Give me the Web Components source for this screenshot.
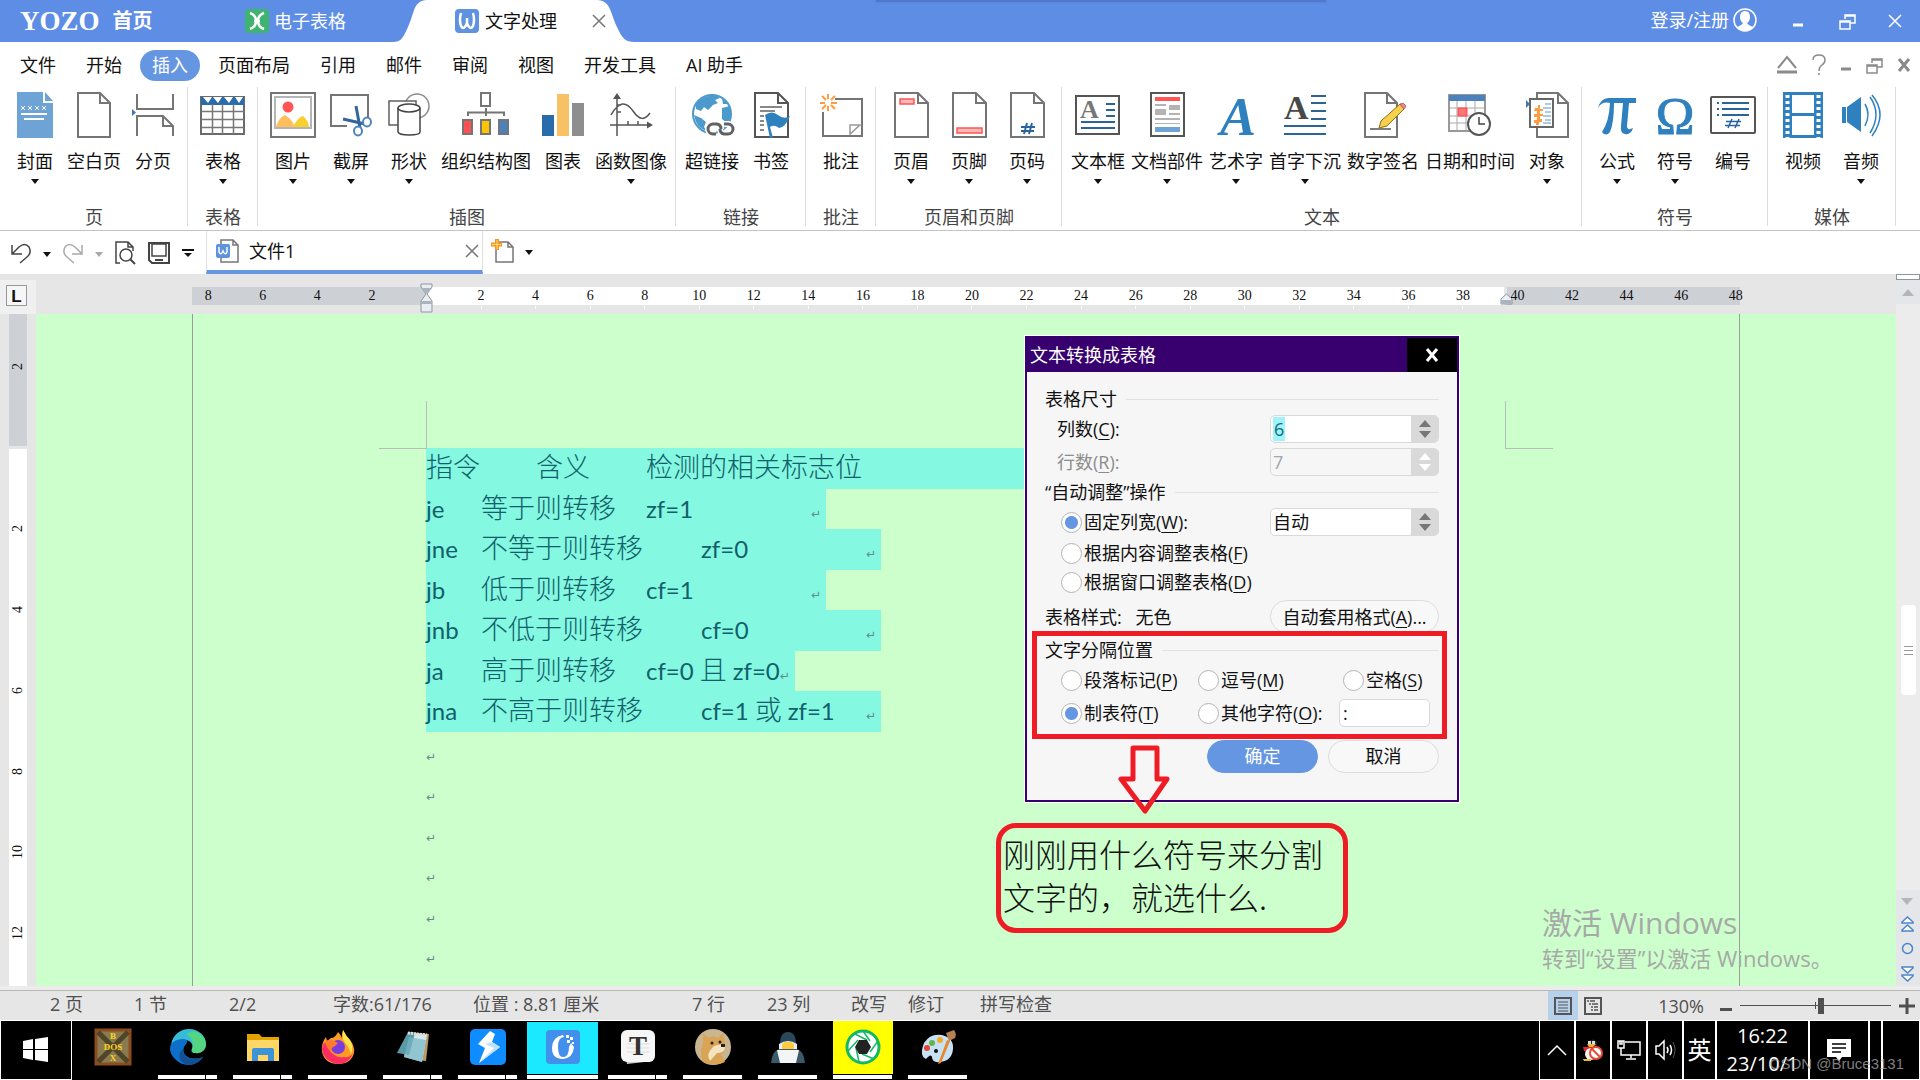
<!DOCTYPE html>
<html lang="zh-CN">
<head>
<meta charset="utf-8">
<title>文字处理 - 文件1</title>
<style>
    body {
        margin: 0;
        min-height: 100vh;
        display: flex;
        flex-direction: column;
        overflow: hidden;
        font: 18px/22px "Open Sans", "Noto Sans CJK SC", sans-serif;
        color: #111;
        background: #fff;
    }
    work-space { flex: 1; }
</style>
</head>
<body>
<title-bar></title-bar>
<ribbon-menu></ribbon-menu>
<ribbon-bar>
    <ribbon-group label="页">
        <ribbon-button icon="cover" menu>封面</ribbon-button>
        <ribbon-button icon="blank">空白页</ribbon-button>
        <ribbon-button icon="break">分页</ribbon-button>
    </ribbon-group>
    <ribbon-group label="表格">
        <ribbon-button icon="table" menu>表格</ribbon-button>
    </ribbon-group>
    <ribbon-group label="插图">
        <ribbon-button icon="picture" menu>图片</ribbon-button>
        <ribbon-button icon="snip" menu>截屏</ribbon-button>
        <ribbon-button icon="shapes" menu>形状</ribbon-button>
        <ribbon-button icon="org">组织结构图</ribbon-button>
        <ribbon-button icon="chart">图表</ribbon-button>
        <ribbon-button icon="func" menu>函数图像</ribbon-button>
    </ribbon-group>
    <ribbon-group label="链接">
        <ribbon-button icon="link">超链接</ribbon-button>
        <ribbon-button icon="bookmark">书签</ribbon-button>
    </ribbon-group>
    <ribbon-group label="批注">
        <ribbon-button icon="comment">批注</ribbon-button>
    </ribbon-group>
    <ribbon-group label="页眉和页脚">
        <ribbon-button icon="header" menu>页眉</ribbon-button>
        <ribbon-button icon="footer" menu>页脚</ribbon-button>
        <ribbon-button icon="pageno" menu>页码</ribbon-button>
    </ribbon-group>
    <ribbon-group label="文本">
        <ribbon-button icon="textbox" menu>文本框</ribbon-button>
        <ribbon-button icon="parts" menu>文档部件</ribbon-button>
        <ribbon-button icon="wordart" menu>艺术字</ribbon-button>
        <ribbon-button icon="dropcap" menu>首字下沉</ribbon-button>
        <ribbon-button icon="sign">数字签名</ribbon-button>
        <ribbon-button icon="date">日期和时间</ribbon-button>
        <ribbon-button icon="object" menu>对象</ribbon-button>
    </ribbon-group>
    <ribbon-group label="符号">
        <ribbon-button icon="formula" menu>公式</ribbon-button>
        <ribbon-button icon="omega" menu>符号</ribbon-button>
        <ribbon-button icon="number">编号</ribbon-button>
    </ribbon-group>
    <ribbon-group label="媒体">
        <ribbon-button icon="video">视频</ribbon-button>
        <ribbon-button icon="audio" menu>音频</ribbon-button>
    </ribbon-group>
</ribbon-bar>
<quick-bar></quick-bar>
<work-space></work-space>
<status-bar></status-bar>
<task-bar></task-bar>

<script>
const SHEET = (x, w) => `<path d="M${x} 1H${x + w - 10}L${x + w} 11V45H${x}Z" fill="#fff" stroke="#757575" stroke-width="2"/><path d="M${x + w - 10} 1V11H${x + w}" fill="none" stroke="#757575" stroke-width="2"/>`;

// name: [width, height, markup]
const ICONS = {
    cover: [48, 46, `<path d="M6 0H32V11H42V46H6Z" fill="#6ea3d5"/><path d="M34 0L42 9H34Z" fill="#6ea3d5"/><path d="M10 14l4 4m0-4l-4 4m7-4l4 4m0-4l-4 4m7-4l4 4m0-4l-4 4m7-4l4 4m0-4l-4 4" stroke="#fff"/><path d="M10 22H36M13 27H33" stroke="#fff" stroke-width="2"/>`],
    blank: [48, 46, SHEET(8, 32)],
    break: [48, 46, `<path d="M8 2V17H44V2M8 44V24H34L44 34V44M34 24V34H44" fill="none" stroke="#757575" stroke-width="2"/><path d="M3 17L7 20.500L3 24Z" fill="#3f78b5"/>`],
    table: [48, 46, `<rect x="2" y="5" width="43" height="37" fill="#fff" stroke="#6b6b6b" stroke-width="2"/><path d="M2 5h43v8H2z" fill="#2a6cab"/><path d="M4 5h9l-4 6zM14 5h9l-4 6zM25 5h9l-4 6zM36 5h8l-4 6z" fill="#fff"/><path d="M2 19.500H45M2 27.500H45M2 35.500H45M13.500 12V42M23.500 12V42M34.500 12V42" stroke="#777" stroke-width="1.500"/>`],
    picture: [48, 46, `<rect x="2" y="1" width="44" height="44" fill="#fff" stroke="#757575" stroke-width="2"/><rect x="6" y="5" width="36" height="31" fill="#fff" stroke="#b5b5b5" stroke-width="2"/><circle cx="19" cy="15" r="5.500" fill="#ff5555"/><path d="M7 35C9 28 12 25 16 23Q22 26 26 35Z" fill="#ffbe5c"/><path d="M24 35Q29 25 34 24Q39 28 40 35Z" fill="#f7cf2e"/>`],
    snip: [48, 46, `<path d="M20 34H4V3H41V26" fill="none" stroke="#757575" stroke-width="2"/><path d="M16 27L38 32M29 14L33 36" stroke="#33659e" stroke-width="3"/><ellipse cx="31" cy="39" rx="4" ry="4.500" fill="#fff" stroke="#4d83bd" stroke-width="2"/><ellipse cx="40" cy="30" rx="4" ry="4.500" fill="#fff" stroke="#4d83bd" stroke-width="2"/>`],
    shapes: [48, 46, `<circle cx="32" cy="14" r="12" fill="#fff" stroke="#8c8c8c" stroke-width="1.500"/><rect x="4" y="9" width="27" height="24" fill="#fff" stroke="#606060" stroke-width="1.500"/><path d="M13 16V40Q14 43 24 43Q35 43 35 40V16" fill="#fff" stroke="#444" stroke-width="1.500"/><ellipse cx="24" cy="16" rx="11" ry="4" fill="#fff" stroke="#444" stroke-width="1.500"/>`],
    org: [48, 46, `<rect x="19" y="1" width="9" height="13" fill="#fff" stroke="#757575" stroke-width="2"/><path d="M24 16V24M6 24V20.500H42V24" fill="none" stroke="#757575" stroke-width="2"/><path d="M1 28h9v14h-9z" fill="#ff5151" stroke="#757575" stroke-width="2"/><path d="M19 28h9v14h-9z" fill="#ffc400" stroke="#757575" stroke-width="2"/><path d="M37 28h9v14h-9z" fill="#4b82bd" stroke="#757575" stroke-width="2"/>`],
    chart: [48, 46, `<path d="M3 23h12v21H3z" fill="#286cab"/><path d="M18 2h12v42H18z" fill="#f8c264"/><path d="M33 11h12v33H33z" fill="#8e8e8e"/>`],
    func: [48, 46, `<path d="M10 44V4M3 33H44M4 23C12 9 19 9 26 19S38 28 43 21M10 13h4M10 20h4M21 33v-4M31 33v-4" fill="none" stroke="#555" stroke-width="1.500"/><path d="M6 7L10 1L14 7zM40 29.500L46 33L40 36.500z" fill="#555"/>`],
    link: [48, 46, `<circle cx="24" cy="22" r="19" fill="#fff" stroke="#4c9acb" stroke-width="2"/><path d="M8 12Q15 3 28 3L32 6L27 8L30 11L25 13L20 18L16 15L13 19L8 17zM6 23L13 26L18 30L16 35L19 39Q8 36 6 23zM34 16L42 14Q45 25 39 31L34 27zM34 6L40 12L35 12z" fill="#4c9acb"/><g fill="none" stroke="#fff" stroke-width="6"><path d="M28 42H25A5 5 0 0 1 25 32H29A5 5 0 0 1 33 37M36 32H40A5 5 0 0 1 40 42H36A5 5 0 0 1 32 37"/></g><g fill="none" stroke="#626262" stroke-width="3"><path d="M28 42H25A5 5 0 0 1 25 32H29A5 5 0 0 1 33 37M36 32H40A5 5 0 0 1 40 42H36A5 5 0 0 1 32 37"/></g>`],
    bookmark: [48, 46, SHEET(8, 33).replaceAll('#757575', '#555') + `<path d="M13 15H35M13 19H28M13 24H17M13 29H17M13 33H17M13 38H17" stroke="#888" stroke-width="2"/><path d="M18 23Q25 18 31 23Q37 28 43 24Q38 36 32 36Q27 32 23 35L26 46H23Z" fill="#2f80be"/>`],
    comment: [48, 46, `<path d="M18 7H45V44H6V20" fill="none" stroke="#757575" stroke-width="2"/><path d="M33 42V33H43ZM33 42L43 33" fill="#fff" stroke="#999" stroke-width="1.500"/><path d="M11 2v5M11 14v5M3 11h5M14 11h6M5 4l4 4M18 4l-4 4M5 17l4-4M18 17l-4-4" stroke="#ff9c3f" stroke-width="2"/>`],
    header: [48, 46, SHEET(8, 33) + `<rect x="13" y="7" width="14" height="5" fill="#ffb9b9" stroke="#f55" stroke-width="1.500"/>`],
    footer: [48, 46, SHEET(8, 33) + `<rect x="12" y="36" width="25" height="5" fill="#ffb9b9" stroke="#f55" stroke-width="1.500"/>`],
    pageno: [48, 46, SHEET(8, 33) + `<path d="M24 31L21 42M29 31L26 42M18 35H32M18 39H31" stroke="#28659f" stroke-width="2"/>`],
    textbox: [48, 46, `<rect x="2" y="4" width="43" height="38" fill="#fff" stroke="#555" stroke-width="2"/><text x="6" y="26" font-size="26" font-weight="bold" fill="#777">A</text><path d="M32 12h9M32 18h9M32 24h9M7 30h34M7 36h34" stroke="#2a6598" stroke-width="2"/>`],
    parts: [48, 46, `<rect x="8" y="1" width="33" height="43" fill="#fff" stroke="#555" stroke-width="2"/><path d="M12 5h25v4H12z" fill="#ff5555"/><path d="M12 12h11v2H12zM12 17h11v6H12zM26 13h11v5H26zM26 21h11v2H26zM12 26h25v2H12zM12 31h25v1H12z" fill="#b3b3b3"/><path d="M12 35h25v5H12z" fill="#6ea3d5"/>`],
    wordart: [48, 46, `<text x="8" y="43" font-size="54" font-style="italic" font-weight="bold" fill="#2f80be">A</text>`],
    dropcap: [48, 46, `<text x="3" y="27" font-size="34" font-weight="bold" fill="#484848">A</text><path d="M30 4h15M30 11h15M30 19h15M30 27h15M3 34h42M3 42h42" stroke="#2a6598" stroke-width="2"/>`],
    sign: [48, 46, SHEET(6, 32) + `<path d="M11 37H32" stroke="#555" stroke-width="1.500"/><path d="M20 36L22 29L41 12L45 17L28 34Z" fill="#f8d04b" stroke="#8a6a1a"/><path d="M41 12Q45 10 47 14L45 17Z" fill="#f29090" stroke="#b56"/>`],
    date: [48, 46, `<rect x="3" y="3" width="36" height="36" fill="#fff" stroke="#999" stroke-width="2"/><path d="M3 9h36v-6H3z" fill="#4b82bd"/><path d="M4 16H38M4 24H38M4 31H38M11 9V38M20 9V38M29 9V38" stroke="#aaa"/><path d="M12 16h9v8h-9z" fill="#ff7474" stroke="#f44"/><circle cx="33" cy="32" r="11" fill="#fff" stroke="#555" stroke-width="2"/><path d="M33 25v7h6" fill="none" stroke="#444" stroke-width="1.500"/>`],
    object: [48, 46, SHEET(14, 31) + `<rect x="7" y="7" width="23" height="28" fill="#fff" stroke="#666" stroke-width="2"/><path d="M3 8L7 12L3 16Z" fill="#3f78b5"/><path d="M12 16h3v-3h2v4h3v2h-3v3h3v2h-3v3h2v3h-3v3h-3v-2h-2v-3h3v-3h-3v-3h3v-3h-3z" fill="#ff9c3f"/><path d="M22 12h6M20 16h8M22 20h6M20 24h8M22 28h6M20 31h8" stroke="#5a93ca"/>`],
    formula: [48, 46, `<path d="M5 16Q8 5 17 6H43V11H36L34 34Q34 39 40 36Q38 43 32 42Q27 41 28 34L30 11H21Q21 31 17 40Q13 45 9 40Q16 30 17 11Q9 9 5 16Z" fill="#2f80be"/>`],
    omega: [48, 46, `<text x="24" y="42" text-anchor="middle" font-size="52" fill="#2f80be" stroke="#2f80be">Ω</text>`],
    number: [48, 46, `<rect x="2" y="5" width="44" height="36" rx="1" fill="#fff" stroke="#555" stroke-width="2"/><path d="M13 11h27M13 17h27M13 23h27" stroke="#2a6598" stroke-width="2"/><path d="M8 11h2M8 17h2M8 23h2" stroke="#2a6598" stroke-width="2"/><path d="M23 27L19 36M30 27L26 36M17 29.500H32M16 33.500H31" stroke="#28659f" stroke-width="1.500"/>`],
    video: [48, 46, `<path d="M4 0h40v46H4z" fill="#2f80be"/><path d="M13 3h22v18H13zM13 24h22v19H13z" fill="#fff"/><path d="M8.500 3V46M39.500 3V46" stroke="#fff" stroke-width="4" stroke-dasharray="3 3"/>`],
    audio: [48, 46, `<path d="M5 15H9V31H5zM10 15L24 5V40L10 30z" fill="#2f80be"/><path d="M28 12Q34 22 28 34M33 5Q45 22 33 41M35 3Q51 22 35 44" fill="none" stroke="#2f80be" stroke-width="1.500"/>`],
    down: [8, 5, `<path d="M0 0H8L4 5Z" fill="currentColor"/>`],
    sheetX: [24, 24, `<rect width="24" height="24" rx="4" fill="#3fb36f"/><path d="M5 4Q11 6 11 12T5 20M19 4Q13 6 13 12T19 20M9 12h6" fill="none" stroke="#fff" stroke-width="2.500"/>`],
    wordW: [24, 24, `<rect width="24" height="24" rx="4" fill="#5f93df"/><path d="M6 4Q4 11 6 17Q9 22 12 14V9V14Q15 22 18 17Q20 11 18 4" fill="none" stroke="#fff" stroke-width="2.500"/>`],
    tabLeft: [34, 42, `<path d="M34 0C20 1 22 12 15 27C10 38 8 42 0 42H34Z" fill="#fff"/>`],
    tabRight: [38, 42, `<path d="M0 0C14 1 13 12 20 27C25 38 28 42 38 42H0Z" fill="#fff"/>`],
    close: [14, 14, `<path d="M1 1L13 13M13 1L1 13" stroke="currentColor" stroke-width="1.500"/>`],
    closeBold: [14, 14, `<path d="M2 1L12 13M12 1L2 13" stroke="currentColor" stroke-width="3"/>`],
    min: [12, 14, `<path d="M1 11H11" stroke="currentColor" stroke-width="3"/>`],
    restore: [17, 17, `<path d="M6 6V2H16V10H11M1 8H11V16H1ZM1 9H11M6 3H16" fill="none" stroke="currentColor" stroke-width="1.500"/>`],
    user: [24, 24, `<circle cx="12" cy="12" r="11" fill="none" stroke="#fff" stroke-width="1.500"/><path d="M12 3Q17 3 17 9Q17 13 14 15Q15 17 20 19Q17 23 12 23T4 19Q9 17 10 15Q7 13 7 9Q7 3 12 3Z" fill="#fff"/>`],
    fold: [22, 20, `<path d="M2 13L11 2L20 13" fill="none" stroke="currentColor" stroke-width="2"/><path d="M1 17H21" stroke="currentColor" stroke-width="3"/>`],
    help: [14, 22, `<path d="M1 6Q1 1 7 1T13 6Q13 9 10 11Q7 13 7 17M7 19V21" fill="none" stroke="currentColor" stroke-width="1.500"/>`],
    undo: [20, 22, `<path d="M1 3V12H11M1 12L8 5Q14 0 18 5Q21 11 16 15L9 21" fill="none" stroke="#444" stroke-width="1.500"/>`],
    redo: [20, 22, `<path d="M19 3V12H9M19 12L12 5Q6 0 2 5Q-1 11 4 15L11 21" fill="none" stroke="currentColor" stroke-width="1.500"/>`],
    preview: [21, 24, `<path d="M5 22H1V1H13L18 6V10M13 1V6H18" fill="none" stroke="#444" stroke-width="1.500"/><circle cx="11" cy="14" r="6" fill="none" stroke="#444" stroke-width="1.500"/><path d="M15 18L20 23" stroke="#444" stroke-width="2"/>`],
    save: [22, 22, `<path d="M1 1H21V21H4L1 18Z" fill="none" stroke="#444" stroke-width="2"/><rect x="4" y="2" width="14" height="12" fill="none" stroke="#444" stroke-width="1.500"/><path d="M7 18H15" stroke="#444" stroke-width="2"/>`],
    more: [12, 8, `<path d="M0 1H12" stroke="#111" stroke-width="2"/><path d="M2 4H10L6 8Z" fill="#111"/>`],
    docW: [24, 24, `<path d="M5 1H17L22 6V23H5ZM17 1V6H22" fill="#fff" stroke="#777" stroke-width="1.500"/><rect y="5" width="14" height="14" rx="2" fill="#5f93df"/><path d="M3 8V13Q5 17 7 12Q9 17 11 13V8" fill="none" stroke="#fff" stroke-width="1.500"/>`],
    newDoc: [24, 24, `<path d="M5 3H17L22 8V23H5ZM17 3V8H22" fill="#fff" stroke="#757575" stroke-width="1.500"/><path d="M6 0V11M0 5.500H11" stroke="#f7942c" stroke-width="4"/><path d="M6 1V10M1 5.500H10" stroke="#ffdf66"/>`],
    indent: [13, 30, `<path d="M1 1H12V4L7 11L12 18V29H1V18L6 11L1 4Z" fill="#e9edf4" stroke="#8f959d"/><path d="M1 5H12L7 11ZM1 18H12V21H1Z" fill="#abb3bf"/>`],
    indentRight: [13, 12, `<path d="M6.500 1L12 6V11H1V6Z" fill="#eef1f6" stroke="#8f959d"/><path d="M1 7H12V11H1Z" fill="#abb3bf"/>`],
    triUp: [12, 7, `<path d="M0 7L6 0L12 7Z" fill="currentColor"/>`],
    triDown: [12, 7, `<path d="M0 0H12L6 7Z" fill="currentColor"/>`],
    prev: [13, 16, `<path d="M1 7V6L6.500 1L12 6V7ZM1 15V14L6.500 9L12 14V15Z" fill="#fff" stroke="#4b84c8" stroke-width="1.500"/>`],
    dot: [13, 13, `<circle cx="6.500" cy="6.500" r="5" fill="none" stroke="#4b84c8" stroke-width="1.500"/>`],
    next: [13, 16, `<path d="M1 1V2L6.500 7L12 2V1ZM1 9V10L6.500 15L12 10V9Z" fill="#fff" stroke="#4b84c8" stroke-width="1.500"/>`],
    viewPage: [18, 18, `<rect x="1" y="1" width="16" height="16" fill="none" stroke="#555" stroke-width="2"/><path d="M4 5H14M4 8H14M4 11H14M4 14H14" stroke="#555"/>`],
    viewOutline: [18, 18, `<rect x="1" y="1" width="16" height="16" fill="none" stroke="#555" stroke-width="2"/><path d="M3 4H5M6 4H11M5 7H7M8 7H14M7 10H9M10 10H14M7 13H9M10 13H14" stroke="#555" stroke-width="1.500"/>`],
    minus: [12, 3, `<path d="M0 0H12V3H0Z" fill="#505050"/>`],
    plus: [16, 16, `<path d="M0 8H16M8 0V16" stroke="#505050" stroke-width="3"/>`],
    arrow: [52, 70, `<path d="M15 3H39V34H49L27 66L3 34H15Z" fill="none" stroke="#ee1c24" stroke-width="5" stroke-linejoin="round"/>`],
    win: [26, 26, `<path d="M0 4L10 2V12H0ZM12 2L25 0V12H12ZM0 13H10V23L0 21ZM12 13H25V25L12 23Z" fill="#fff"/>`],
    dosbox: [36, 36, `<rect x="1" y="1" width="34" height="34" fill="#8a7a50" stroke="#8e4b1e" stroke-width="3"/><path d="M3 3L33 33M33 3L3 33" stroke="#4f4528" stroke-width="5"/><g font-size="9" font-weight="bold" fill="#ffd21f" text-anchor="middle"><text x="18" y="10">B</text><text x="18" y="21">DOS</text><text x="18" y="32">X</text></g>`],
    edge: [36, 36, `<path d="M1 16C3 4 12 0 19 0C29 0 36 7 36 15C36 21 31 25 25 24C22 24 21 22 22 20C24 15 20 11 15 11C8 11 3 15 1 16Z" fill="#35bdd8"/><path d="M24 2C32 5 36 10 36 15C36 21 31 25 25 24C22 24 21 22 22 20C24 16 23 8 16 5Z" fill="#5ddb6a" opacity=".8"/><path d="M0 20C0 12 8 10 14 10C20 11 16 15 14 18C11 28 22 32 33 28C26 38 13 38 6 31C2 27 0 24 0 20Z" fill="#0d6fc9"/><path d="M13 20C11 28 22 32 33 28C28 36 19 37 15 35C8 32 8 23 13 20Z" fill="#124f93"/>`],
    explorer: [36, 36, `<path d="M2 5H14L17 8H34V31H2Z" fill="#e5a300"/><path d="M2 11H34V32H2Z" fill="#ffd766"/><path d="M7 32V21Q7 19 9 19H27Q29 19 29 21V32H23V26H13V32Z" fill="#3c93d6"/>`],
    firefox: [36, 36, `<path d="M18 3Q21 6 22 9Q22 4 23 1Q26 7 30 11Q35 17 34 24Q31 35 18 35Q5 35 2 23Q1 14 6 8L7 12L11 9Q15 9 18 3Z" fill="#ff9a22"/><path d="M2 21Q4 32 17 35Q30 35 34 22Q32 29 24 28Q12 30 5 13Q2 16 2 21Z" fill="#fb2d63"/><path d="M23 1Q26 7 30 11Q34 18 31 25Q29 18 26 15Q21 10 23 1Z" fill="#ffe24d"/><circle cx="18" cy="18" r="7" fill="#7a3be0"/><path d="M6 12Q11 9 18 14L15 17Q12 18 10 22Q6 18 6 12Z" fill="#ff7b2b"/>`],
    notepad: [36, 36, `<path d="M14 3L34 5L31 32L22 31Z" fill="#b79a67"/><path d="M13 3L32 6L27 33L9 28Z" fill="#d5e9ec"/><path d="M13 3L20 4L14 26L2 24Z" fill="#5a9aa6"/><path d="M14 8L31 11L27 33L9 28Z" fill="#74b6c4" opacity=".7"/><path d="M13 4L32 6" stroke="#ddd" stroke-width="3" stroke-dasharray="2 1"/>`],
    thunder: [36, 36, `<rect width="36" height="36" rx="5" fill="#0f8cff"/><path d="M20 2L8 15L15 19L9 34L30 18L22 13L25 5Z" fill="#fff"/><path d="M22 13L30 18L9 34L24 19L15 15Z" fill="#bfe0ff"/>`],
    yozo: [36, 36, `<rect x="1" y="1" width="34" height="34" rx="4" fill="#438fec"/><path d="M18 6Q7 8 7 19T18 30Q28 29 29 18L26 14L24 18Q24 28 18 28Q13 28 13 18T19 8Z" fill="#fff"/><path d="M21 6h3v3h-3zM25 8h3v3h-3zM22 11h3v3h-3zM27 13h2v2h-2z" fill="#fff"/>`],
    typora: [36, 36, `<path d="M2 6L31 3L33 32L7 35Z" fill="#ccc"/><rect x="1" y="1" width="34" height="32" rx="6" fill="#f6f6f6"/><path d="M7 15H29M7 19H29M7 23H29" stroke="#ddd"/><text x="18" y="26" font-size="27" font-weight="bold" text-anchor="middle" fill="#333">T</text>`],
    doge: [36, 36, `<circle cx="18" cy="18" r="18" fill="#c9b58f"/><path d="M8 4L13 9Q19 6 23 9L28 4L30 15Q31 22 26 25L30 33Q20 38 8 33Q4 22 8 15Z" fill="#d9a455"/><path d="M19 17Q29 13 30 19Q29 24 22 24L15 32Q10 25 19 17Z" fill="#f5e4c0"/><path d="M26 15h4v3h-4z" fill="#222"/><circle cx="17" cy="14" r="1.500" fill="#222"/><circle cx="25" cy="13" r="1.500" fill="#222"/>`],
    linux: [36, 36, `<path d="M10 15Q10 3 18 3T26 15V20H10Z" fill="#29495a"/><path d="M9 15Q18 9 27 15V22H9Z" fill="#e7edf0"/><rect x="12" y="13" width="12" height="9" rx="4" fill="#ffc93d"/><path d="M1 34Q2 21 10 20H26Q34 21 35 34Z" fill="#3a5a6c"/><path d="M7 21H29L26 34H10Z" fill="#f3f4f5"/>`],
    shutter: [36, 36, `<circle cx="18" cy="18" r="16" fill="#fff" stroke="#12b862" stroke-width="3"/><path d="M18 2L25 12M33 12L25 23M29 30L17 25M14 33L11 19M3 22L13 11M10 5L22 11" stroke="#12b862" stroke-width="1.500"/><path d="M14 11H22L26 18L22 25H14L10 18Z" fill="#222"/>`],
    paint: [36, 36, `<path d="M4 14Q10 4 22 6Q34 9 33 20Q32 32 20 33Q12 34 12 28Q11 24 6 30Q-1 27 4 14Z" fill="#c6e2f4"/><circle cx="7" cy="19" r="3" fill="#e6453c"/><circle cx="12" cy="14" r="3" fill="#62b54a"/><circle cx="20" cy="11" r="3" fill="#f7a928"/><circle cx="16" cy="22" r="2" fill="#111"/><path d="M18 35L27 11L30 12L21 34Z" fill="#e8862c"/><path d="M26 4L34 1Q37 5 35 9L29 12Z" fill="#b98050"/>`],
    chevron: [20, 11, `<path d="M1 10L10 1L19 10" fill="none" stroke="#fff" stroke-width="1.500"/>`],
    qq: [20, 22, `<path d="M5 3Q10 -2 14 3V8H5Z" fill="#222"/><path d="M5 2h3v3H5zM9 2h3v3H9z" fill="#ddd"/><path d="M4 5H13L10 8H6Z" fill="#f2b632"/><path d="M0 8H14V12H1Z" fill="#e32626"/><ellipse cx="8" cy="15" rx="6" ry="6" fill="#f5f5f5"/><path d="M0 20H8V22H1Z" fill="#f2b632"/><circle cx="13" cy="14" r="6" fill="#fff" stroke="#e8483a" stroke-width="2"/><path d="M9 10L17 18" stroke="#e8483a" stroke-width="2"/>`],
    net: [24, 20, `<path d="M8 2H23V15H4V10M14 15V18M9 19H19M1 1H7V8H1ZM4 8V10M3 1V4H5V1" fill="none" stroke="#fff" stroke-width="1.500"/>`],
    speaker: [20, 20, `<path d="M1 6H4L9 1V19L4 14H1Z" fill="none" stroke="#fff" stroke-width="1.500"/><path d="M12 7Q14 10 12 13M15 5Q18 10 15 15" fill="none" stroke="#fff" stroke-width="1.500"/><path d="M18 2Q22 10 18 18" fill="none" stroke="#555"/>`],
    notify: [24, 24, `<path d="M0 1H24V19H15L12 23L9 19H0Z" fill="#fff"/><path d="M5 6H19M5 10H19M5 14H14" stroke="#000" stroke-width="1.500"/>`]
};

const BASE = `
    *, :host { box-sizing: border-box; }
    button, input { font: inherit; color: inherit; }
    button { border: 0; padding: 0; background: none; }
`;

function define(name, render) {
    customElements.define(name, class extends HTMLElement {
        constructor() {
            super();
            this.attachShadow({ mode: 'open' });
        }
        connectedCallback() {
            const [css, html] = render(this);
            this.shadowRoot.innerHTML = `<style>${BASE}${css}</style>${html}`;
        }
    });
}

const icon = name => `<yz-icon name="${name}"></yz-icon>`;

define('yz-icon', el => {
    const [w, h, body] = ICONS[el.getAttribute('name')];
    return [
        `:host { display: inline-block; flex: none; width: ${w}px; height: ${h}px; line-height: 0; }
         svg { overflow: visible; }
         text { font-family: "Liberation Serif", serif; }`,
        `<svg width="${w}" height="${h}" viewBox="0 0 ${w} ${h}" aria-hidden="true">${body}</svg>`
    ];
});

define('title-bar', () => [`
    :host { display: flex; height: 42px; background: #5e8de6; color: #fff; align-items: center; position: relative; }
    .shade { position: absolute; top: 0; left: 876px; width: 450px; height: 2px; background: #4f79cb; box-shadow: 0 0 3px #4f79cb; }
    .home { display: flex; align-items: center; gap: 13px; margin-left: 20px; width: 225px; font-size: 20px; font-weight: bold; }
    .home b { font: bold 27px/42px "Liberation Serif", serif; }
    .app { display: flex; align-items: center; gap: 5px; width: 148px; }
    .current { display: flex; height: 42px; color: #111; }
    .current > span { display: flex; align-items: center; gap: 6px; width: 170px; padding-left: 28px; background: #fff; }
    .current button { position: relative; margin: 0 -9px 0 auto; color: #777; line-height: 0; }
    .right { margin-left: auto; display: flex; align-items: center; margin-right: 18px; }
    .right > button { line-height: 0; }
    .right .login { display: flex; align-items: center; gap: 4px; line-height: 22px; margin-right: 35px; padding-bottom: 2px; }
    .right .m { margin-right: 35px; }
    .right .r { margin-right: 32px; }
`, `
    <div class="shade"></div>
    <div class="home"><b>YOZO</b><span>首页</span></div>
    <div class="app">${icon('sheetX')}<span>电子表格</span></div>
    <div class="current">${icon('tabLeft')}<span>${icon('wordW')}文字处理<button aria-label="关闭">${icon('close')}</button></span>${icon('tabRight')}</div>
    <div class="right">
        <button class="login">登录/注册${icon('user')}</button>
        <button class="m" aria-label="最小化">${icon('min')}</button>
        <button class="r" aria-label="还原">${icon('restore')}</button>
        <button aria-label="关闭">${icon('close')}</button>
    </div>
`]);

define('ribbon-menu', () => [`
    :host { display: flex; align-items: center; height: 45px; padding: 1px 9px 0 8px; }
    nav { display: flex; gap: 6px; }
    a { padding: 4px 12px 5px; border-radius: 16px; color: #111; text-decoration: none; }
    a.on { background: #6596e2; color: #fff; }
    .right { margin-left: auto; display: flex; align-items: center; gap: 14px; color: #8a8a8a; }
    .right button { line-height: 0; }
`, `
    <nav>${['文件', '开始', '插入', '页面布局', '引用', '邮件', '审阅', '视图', '开发工具', 'AI 助手']
        .map(t => `<a href="#"${t === '插入' ? ' class="on"' : ''}>${t}</a>`).join('')}</nav>
    <div class="right">
        <button aria-label="折叠">${icon('fold')}</button>
        <button aria-label="帮助">${icon('help')}</button>
        <button aria-label="最小化">${icon('min')}</button>
        <button aria-label="还原">${icon('restore')}</button>
        <button aria-label="关闭">${icon('closeBold')}</button>
    </div>
`]);

define('ribbon-bar', () => [
    `:host { display: flex; padding-bottom: 4px; border-bottom: 1px solid #c4c4c4; }`,
    `<slot></slot>`
]);

define('ribbon-group', el => [`
    :host { display: flex; flex-direction: column; justify-content: space-between; height: 139px; padding: 5px 5px 0 6px; border-right: 1px solid #dcdcdc; }
    .items { display: flex; }
    footer { text-align: center; line-height: 18px; color: #444; }
`, `<div class="items"><slot></slot></div><footer>${el.getAttribute('label')}</footer>`]);

define('ribbon-button', el => [`
    :host { display: block; }
    button { display: flex; flex-direction: column; align-items: center; min-width: 58px; padding: 0 3px; white-space: nowrap; }
    .label { margin: 12px 0 5px; line-height: 22px; }
    .none { height: 5px; }
`, `<button>${icon(el.getAttribute('icon'))}<span class="label"><slot></slot></span>${el.hasAttribute('menu') ? icon('down') : '<span class="none"></span>'}</button>`]);

define('quick-bar', () => [`
    :host { display: flex; height: 43px; align-items: center; padding-left: 11px; }
    button { line-height: 0; }
    .tools { display: flex; align-items: center; width: 195px; gap: 12px; }
    .tools .grey { color: #a9a9a9; }
    .tab { display: flex; align-items: center; gap: 9px; width: 277px; height: 43px; padding: 0 3px 0 9px; border: solid #e0e0e0; border-width: 0 1px; border-bottom: 4px solid #6596e2; }
    .tab button { margin-left: auto; color: #777; }
    .new { display: flex; align-items: center; gap: 10px; margin-left: 8px; padding-bottom: 4px; }
`, `
    <div class="tools">
        <button aria-label="撤销">${icon('undo')}</button>
        <button aria-label="撤销列表">${icon('down')}</button>
        <button class="grey" aria-label="重做">${icon('redo')}</button>
        <button class="grey" aria-label="重做列表">${icon('down')}</button>
        <button aria-label="打印预览">${icon('preview')}</button>
        <button aria-label="保存">${icon('save')}</button>
        <button aria-label="更多">${icon('more')}</button>
    </div>
    <div class="tab">${icon('docW')}<span>文件1</span><button aria-label="关闭">${icon('close')}</button></div>
    <div class="new"><button aria-label="新建">${icon('newDoc')}</button><button aria-label="新建列表">${icon('down')}</button></div>
`]);

define('h-ruler', () => {
    let cells = '';
    for (let n = -8; n <= 48; n += 2) {
        cells += `<span class="${n > 0 && n < 40 ? 'tick' : ''}">${n === 0 ? '' : Math.abs(n)}</span>`;
    }
    return [`
        :host { display: flex; justify-content: center; background: #e6e6e6; padding-top: 13px; overflow: hidden; }
        .strip { position: relative; flex: none; width: 1548px; height: 18px; background: linear-gradient(to right, #cdd0d5 234px, #fff 234px 1312px, #e6e6e6 1312px 1315px, #cdd0d5 1315px); }
        .nums { display: grid; grid-template-columns: repeat(29, 1fr); width: 1582px; margin-left: -11px; font: 14px/17px "Liberation Serif", serif; text-align: center; }
        .tick::after { content: ""; display: block; width: 1px; height: 3px; margin: 2px auto 0; background: #fff; }
        .left, .right { position: absolute; line-height: 0; }
        .left { left: 228px; top: -4px; }
        .right { left: 1308px; top: 6px; }
    `, `<div class="strip"><div class="nums">${cells}</div><div class="left">${icon('indent')}</div><div class="right">${icon('indentRight')}</div></div>`];
});

define('v-ruler', () => [`
    :host { display: block; background: #e6e6e6; padding: 0 9px; overflow: hidden; }
    .strip { height: 100%; padding-top: 12px; background: linear-gradient(#cdd0d5 132px, #e6e6e6 132px 135px, #fff 135px); }
    span { display: flex; align-items: center; justify-content: center; height: 81px; font: 14px/18px "Liberation Serif", serif; writing-mode: vertical-rl; transform: rotate(180deg); }
`, `<div class="strip">${[2, '', 2, 4, 6, 8, 10, 12].map(n => `<span>${n}</span>`).join('')}</div>`]);

define('scroll-bar', () => [`
    :host { display: flex; flex-direction: column; align-items: center; background: #ececec; color: #b5b5b5; }
    .split { width: 24px; height: 6px; background: #fff; border: 1px solid #8f959d; flex: none; }
    .up { width: 24px; height: 24px; line-height: 0; background: #e4e6ea; flex: none; }
    .track { flex: 1; display: flex; }
    .thumb { width: 15px; height: 90px; margin-top: 301px; background: #fff; border-radius: 4px; display: flex; flex-direction: column; gap: 3px; align-items: center; justify-content: center; }
    .thumb i { width: 9px; height: 1px; background: #999; }
    .nav { width: 24px; height: 96px; background: #e4e6ea; display: flex; flex-direction: column; align-items: center; justify-content: space-between; padding: 8px 2px 4px 0; }
    .nav button { line-height: 0; }
`, `
    <div class="split"></div>
    <button class="up" aria-label="向上">${icon('triUp')}</button>
    <div class="track"><div class="thumb"><i></i><i></i><i></i></div></div>
    <div class="nav">
        <button aria-label="向下">${icon('triDown')}</button>
        <button aria-label="上一页">${icon('prev')}</button>
        <button aria-label="选择浏览对象">${icon('dot')}</button>
        <button aria-label="下一页">${icon('next')}</button>
    </div>
`]);

define('spin-box', el => {
    const off = el.hasAttribute('disabled');
    return [`
        :host { display: flex; width: 169px; height: 28px; border: 1px solid #d9d9d9; border-radius: 5px; overflow: hidden; background: ${off ? '#f6f6f6' : '#fff'}; }
        input { flex: 1; min-width: 0; padding: 0 2px; border: 0; background: none; outline: 0; }
        input:disabled { color: #a2a6ad; }
        .six { flex: none; width: 12px; padding: 0 0 0 1px; background: #9ff4fb; color: #146a78; margin: 1px 0 1px 2px; }
        .six + .arrows { margin-left: auto; }
        .arrows { width: 27px; background: #d9d9d9; color: ${off ? '#fff' : '#777'}; display: flex; flex-direction: column; align-items: center; justify-content: center; gap: 4px; line-height: 0; }
        .arrows button { line-height: 0; }
    `, `<input class="${el.hasAttribute('selected') ? 'six' : ''}" aria-label="${el.getAttribute('label')}" value="${el.getAttribute('value')}"${off ? ' disabled' : ''}>
        <span class="arrows"><button aria-label="增加">${icon('triUp')}</button><button aria-label="减少">${icon('triDown')}</button></span>`];
});

const radio = (group, id, label, key, tail, on) =>
    `<span class="radio"><input type="radio" name="${group}" id="${id}"${on ? ' checked' : ''}><label for="${id}">${label}(<u>${key}</u>)${tail}</label></span>`;

define('convert-dialog', () => [`
    :host { display: block; width: 434px; border: 2px solid #37006e; background: #f6f6f6; outline: 1px solid #fff; white-space: nowrap; }
    header { display: flex; height: 34px; background: #37006e; color: #fff; align-items: center; padding-left: 3px; }
    header button { margin-left: auto; width: 50px; height: 34px; background: #000; line-height: 0; }
    form { display: flex; flex-direction: column; gap: 5px; padding: 16px 18px 27px; }
    h3 { margin: 0; font: inherit; display: flex; align-items: center; gap: 9px; height: 22px; }
    h3::after { content: ""; flex: 1; height: 1px; background: #e2e2e2; }
    .row { display: flex; align-items: center; justify-content: space-between; height: 28px; padding-left: 12px; }
    .low { height: 24px; }
    .row.off { color: #8c8c8c; }
    .style { height: 35px; padding-left: 0; }
    .radio { display: flex; align-items: center; gap: 2px; }
    .row > .radio { margin-left: 4px; }
    .split { display: grid; grid-template-columns: 137px 145px 1fr; height: 28px; padding-left: 16px; }
    .split .radio:nth-child(2) { width: 140px; }
    .split.two { grid-template-columns: 137px 141px 1fr; }
    input[type=radio] { appearance: none; width: 21px; height: 21px; margin: 0; border: 1px solid #b4b4b4; border-radius: 50%; background: #fff; }
    input[type=radio]:checked { background: radial-gradient(circle, #6596e2 6px, #fff 7px); }
    .other { width: 91px; height: 28px; border: 1px solid #d9d9d9; border-radius: 5px; padding: 0 3px; background: #fff; }
    .pill { height: 33px; border: 1px solid #dcdcdc; border-radius: 17px; background: #f8f8f8; }
    .auto { width: 169px; }
    .actions { display: flex; justify-content: flex-end; gap: 10px; margin-top: 8px; }
    .actions .pill { width: 111px; padding-bottom: 2px; }
    .actions .ok { background: #6596e2; border-color: #6596e2; color: #fff; }
    u { text-underline-offset: 3px; text-decoration-thickness: 1px; }
`, `
    <header>文本转换成表格<button aria-label="关闭">${icon('closeBold')}</button></header>
    <form>
        <h3>表格尺寸</h3>
        <div class="row"><span>列数(<u>C</u>):</span><spin-box label="列数" value="6" selected></spin-box></div>
        <div class="row off"><span>行数(<u>R</u>):</span><spin-box label="行数" value="7" disabled></spin-box></div>
        <h3>“自动调整”操作</h3>
        <div class="row">${radio('fit', 'fixed', '固定列宽', 'W', ':', true)}<spin-box label="固定列宽" value="自动"></spin-box></div>
        <div class="row low">${radio('fit', 'content', '根据内容调整表格', 'F', '')}</div>
        <div class="row low">${radio('fit', 'window', '根据窗口调整表格', 'D', '')}</div>
        <div class="row style"><span>表格样式:&ensp; 无色</span><button type="button" class="pill auto">自动套用格式(<u>A</u>)...</button></div>
        <h3>文字分隔位置</h3>
        <div class="split">${radio('sep', 'para', '段落标记', 'P', '')}${radio('sep', 'comma', '逗号', 'M', '')}${radio('sep', 'space', '空格', 'S', '')}</div>
        <div class="split two">${radio('sep', 'tab', '制表符', 'T', '', true)}${radio('sep', 'other', '其他字符', 'O', ':')}<input class="other" aria-label="其他字符" value=":"></div>
        <div class="actions"><button type="button" class="pill ok">确定</button><button type="button" class="pill">取消</button></div>
    </form>
`]);

const LINES = [
    '指令\t含义\t检测的相关标志位\t\t\t\t',
    'je\t等于则转移\tzf=1\t\t\t↵',
    'jne\t不等于则转移\t\tzf=0\t\t\t↵',
    'jb\t低于则转移\tcf=1\t\t\t↵',
    'jnb\t不低于则转移\t\tcf=0\t\t\t↵',
    'ja\t高于则转移\tcf=0 且 zf=0↵',
    'jna\t不高于则转移\t\tcf=1 或 zf=1\t↵',
    '↵', '↵', '↵', '↵', '↵', '↵'
];

define('doc-page', () => [`
    :host { position: relative; display: block; flex: none; width: 1548px; border: solid #9b9b9b; border-width: 0 1px; padding: 134px 0 0 233px; }
    .text { display: grid; grid-template-rows: repeat(13, 1fr); height: 527px; font: 27px/36px "Noto Sans CJK SC", sans-serif; font-weight: 300; }
    p { margin: 0; display: flex; min-height: 0; white-space: pre; tab-size: 55px; }
    .sel { background: #84f8e0; color: #12606b; }
    i { font: 24px/24px Lato, sans-serif; }
    s { display: inline-block; width: 15px; text-decoration: none; font: 12px/12px "DejaVu Sans", sans-serif; color: #5d8f8a; }
    .corner { position: absolute; top: 87px; width: 48px; height: 48px; border: solid #b9bdb9; }
    .tl { left: 186px; border-width: 0 1px 1px 0; }
    .tr { left: 1312px; border-width: 0 0 1px 1px; }
    convert-dialog, .box, .arrow, .note { position: absolute; }
    convert-dialog { left: 832px; top: 22px; }
    .box { left: 839px; top: 317px; width: 415px; height: 108px; border: 5px solid #ee1c24; }
    .arrow { left: 925px; top: 431px; line-height: 0; }
    .note { left: 803px; top: 509px; width: 352px; height: 110px; padding: 4px 2px; border: 5px solid #ee1c24; border-radius: 20px; font: 32px/43px "Noto Sans CJK SC", sans-serif; font-weight: 300; color: #111; white-space: nowrap; }
`, `
    <div class="corner tl"></div><div class="corner tr"></div>
    <div class="text">${LINES.map(line => {
        const text = line.replace(/[a-z0-9=]+/g, '<i>$&</i>').replace('↵', '<s>↵</s>');
        return `<p><span${line.length > 1 ? ' class="sel"' : ''}>${text}</span></p>`;
    }).join('')}</div>
    <convert-dialog></convert-dialog>
    <div class="box"></div>
    <div class="arrow">${icon('arrow')}</div>
    <div class="note">刚刚用什么符号来分割<br>文字的，就选什么.</div>
`]);

define('work-space', () => [`
    :host { display: grid; grid-template: 40px 1fr / 36px 1fr 24px; min-height: 0; border-bottom: 4px solid #ececec; }
    .corner { background: linear-gradient(#e6e6e6 6px, #f0f0f0 6px); padding: 10px 0 0 6px; }
    .corner button { width: 21px; height: 21px; border: 1px solid #999; background: #f6f6f6; font: bold 17px/22px "Liberation Sans", sans-serif; }
    scroll-bar { grid-area: 1 / 3 / 3 / 4; }
    .canvas { position: relative; display: flex; justify-content: center; background: #cfc; overflow: hidden; }
    .activate { position: absolute; right: 62px; bottom: 11px; width: 292px; color: #a6aaa6; font-size: 22px; line-height: 34px; white-space: nowrap; }
    .activate b { display: block; font-weight: normal; font-size: 30px; line-height: 36px; }
`, `
    <div class="corner"><button aria-label="制表符">L</button></div>
    <h-ruler></h-ruler>
    <scroll-bar></scroll-bar>
    <v-ruler></v-ruler>
    <div class="canvas">
        <doc-page></doc-page>
        <div class="activate"><b>激活 Windows</b>转到“设置”以激活 Windows。</div>
    </div>
`]);

define('status-bar', () => [`
    :host { display: flex; align-items: center; height: 30px; padding-left: 50px; border-top: 1px solid #b8b8b8; background: #e6e6e6; color: #505050; white-space: nowrap; }
    .info { display: grid; grid-template-columns: 84px 95px 104px 140px 219px 75px 84px 57px 72px auto; flex: 1; padding-bottom: 3px; }
    .view { width: 30px; height: 29px; line-height: 0; }
    .on { background: #b5d1ec; }
    .zoom { display: flex; align-items: center; gap: 8px; margin-right: 5px; }
    .zoom button { line-height: 0; }
    .pct { margin: 0 8px 0 50px; }
    input { appearance: none; width: 151px; height: 20px; margin: 0; background: linear-gradient(#505050, #505050) 0 50% / 100% 1px no-repeat, linear-gradient(#505050, #505050) 50% 50% / 1px 7px no-repeat; }
    input::-webkit-slider-thumb { appearance: none; width: 6px; height: 16px; background: #505050; }
`, `
    <div class="info">${['2 页', '1 节', '2/2', '字数:61/176', '位置 : 8.81 厘米', '7 行', '23 列', '改写', '修订', '拼写检查']
        .map(t => `<span>${t}</span>`).join('')}</div>
    <button class="view on" aria-label="页面视图">${icon('viewPage')}</button>
    <button class="view" aria-label="大纲视图">${icon('viewOutline')}</button>
    <div class="zoom">
        <span class="pct">130%</span>
        <button aria-label="缩小">${icon('minus')}</button>
        <input type="range" aria-label="缩放" min="0" max="100" value="54">
        <button aria-label="放大">${icon('plus')}</button>
    </div>
`]);

// [icon, running state]
const TASKS = [['dosbox', ''], ['edge', 'run many'], ['explorer', 'run many'], ['firefox', 'run'], ['notepad', 'run many'], ['thunder', 'run many'],
    ['yozo', 'run active'], ['typora', 'run many'], ['doge', 'run'], ['linux', 'run'], ['shutter', 'run alert'], ['paint', 'run']];

define('task-bar', () => [`
    :host { position: relative; display: flex; height: 60px; border-top: 1px solid #fff; background: #000; color: #fff; }
    button { line-height: 0; }
    .start { width: 72px; border: 1px solid #fff; border-top: 0; }
    .apps { display: flex; flex: 1; padding-left: 3px; }
    .task { width: 75px; display: flex; flex-direction: column; align-items: center; }
    .face { flex: 1; width: 60px; display: flex; align-items: center; justify-content: center; padding-bottom: 2px; }
    .task::after { content: ""; width: 59px; height: 4px; margin: 1px 0; }
    .run::after { background: #fff; }
    .many::after { background: linear-gradient(to right, #fff 47px, #000 47px 48px, #fff 48px); }
    .active .face, .active::after { width: 71px; }
    .active .face { background: #1be9ff; margin-top: 1px; }
    .alert .face { background: #ff0; }
    .tray { display: flex; gap: 2px; padding: 0 1px 1px; background: #fff; }
    .tray > * { width: 34px; background: #000; }
    .tray .lang { width: 31px; font-size: 24px; line-height: 58px; }
    .tray .clock { width: 91px; font-size: 20px; line-height: 28px; text-align: center; white-space: nowrap; padding-top: 1px; }
    .tray .note { width: 58px; }
    .tray .thin { width: 11px; }
    .tray .desk { width: 36px; }
    .mark { position: absolute; right: 16px; bottom: 5px; font: 15px/22px "Liberation Sans", sans-serif; color: rgba(170, 170, 170, .75); }
`, `
    <button class="start" aria-label="开始">${icon('win')}</button>
    <div class="apps">${TASKS.map(([name, state]) => `<button class="task ${state}" aria-label="${name}"><span class="face">${icon(name)}</span></button>`).join('')}</div>
    <div class="tray">
        <button aria-label="隐藏的图标">${icon('chevron')}</button>
        <button aria-label="QQ">${icon('qq')}</button>
        <button aria-label="网络">${icon('net')}</button>
        <button aria-label="音量">${icon('speaker')}</button>
        <button class="lang">英</button>
        <div class="clock">16:22<br>23/10/1</div>
        <button class="note" aria-label="通知">${icon('notify')}</button>
        <span class="thin"></span>
        <button class="desk" aria-label="显示桌面"></button>
    </div>
    <div class="mark">CSDN @Bruce3131</div>
`]);
</script>
</body>
</html>
